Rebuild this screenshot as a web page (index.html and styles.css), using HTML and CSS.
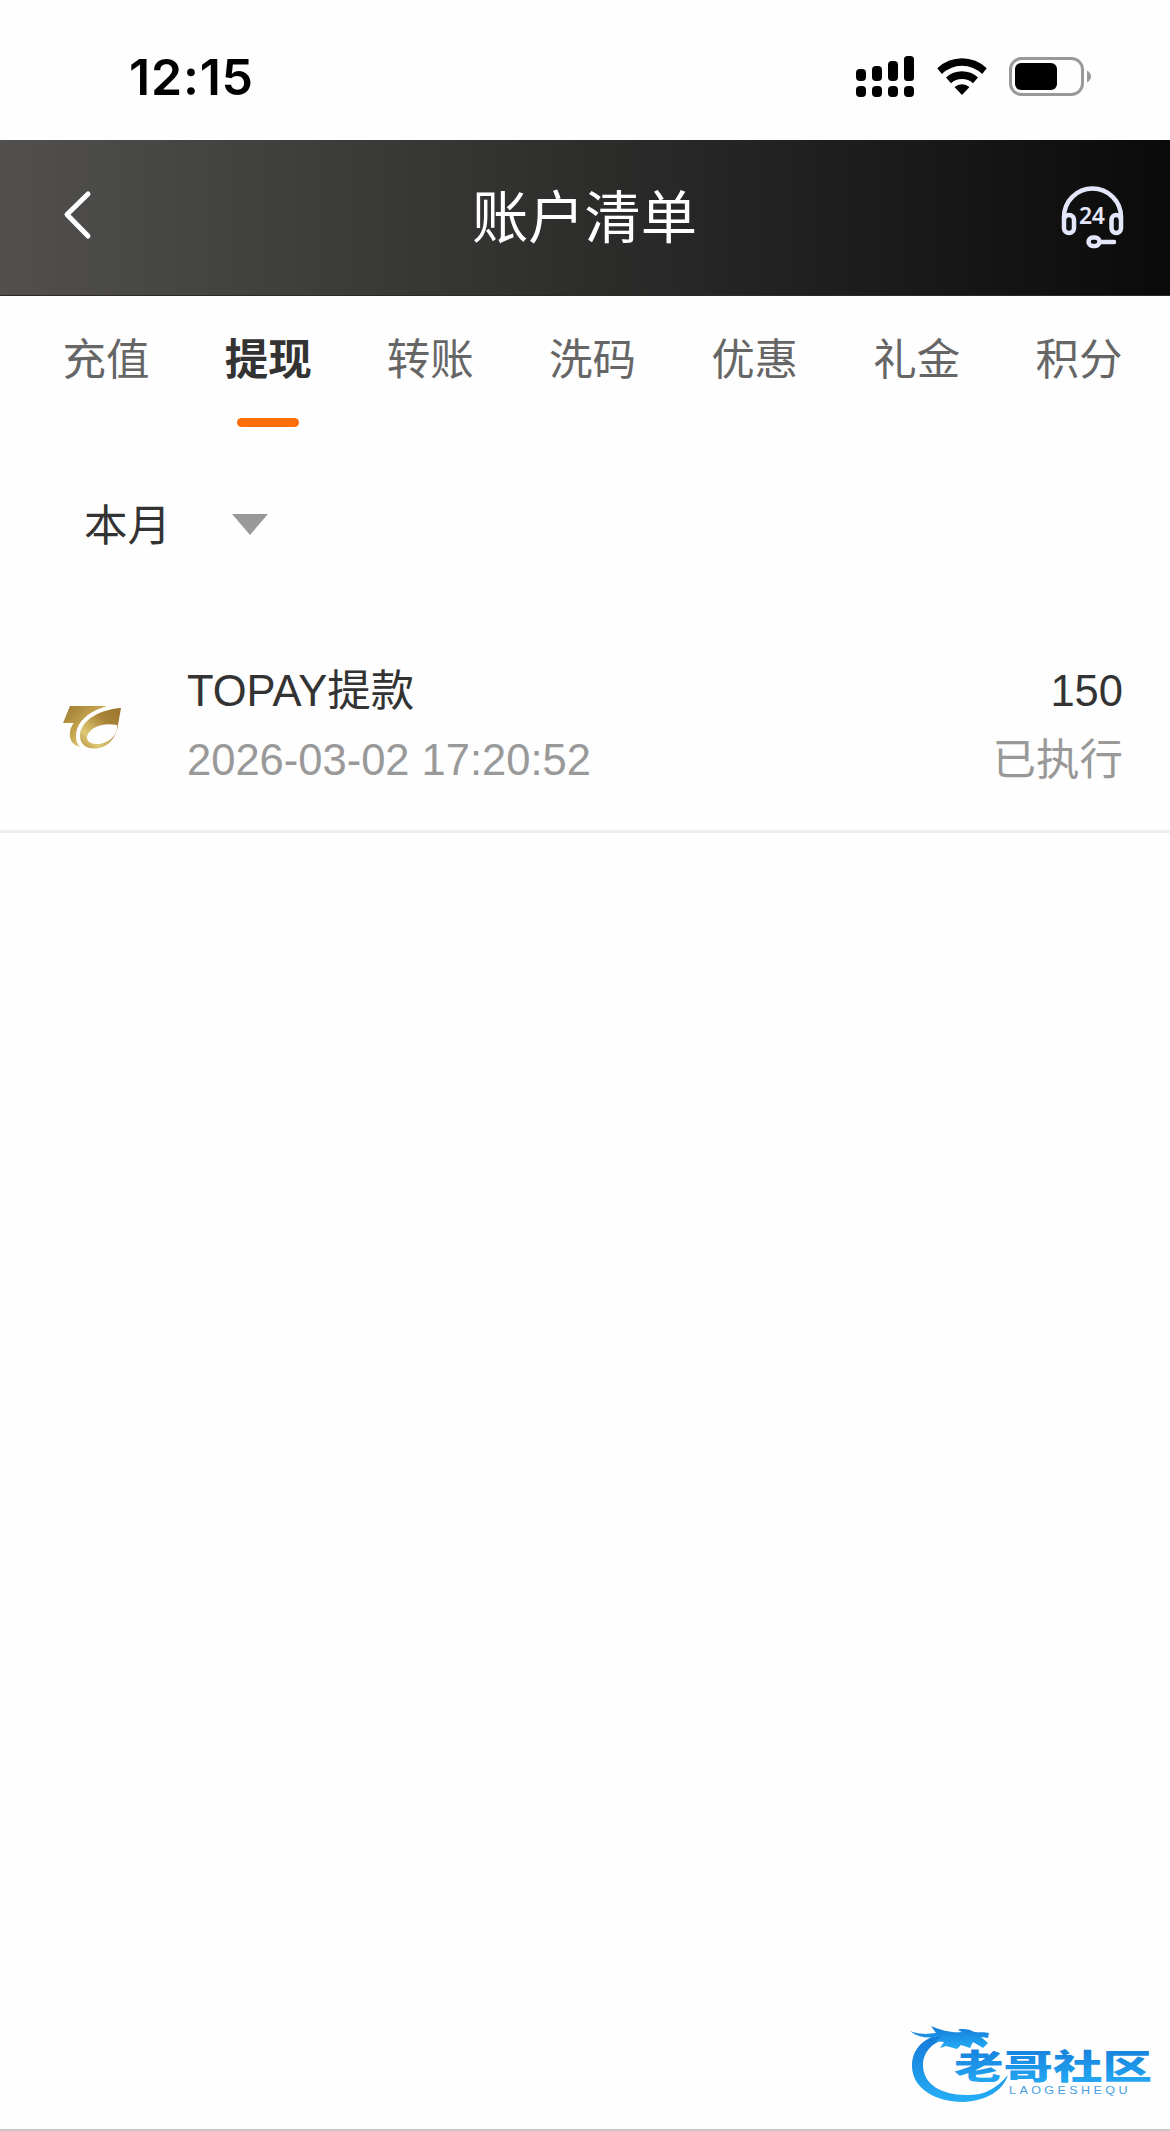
FILE: index.html
```html
<!DOCTYPE html>
<html lang="zh-CN">
<head>
    <meta charset="UTF-8">
    <title>账户清单</title>
    <link rel="stylesheet" href="styles.css">
</head>
<body>
    <div class="status-bar">
        <span class="time">12:15</span>
        <div class="status-icons">
            <svg class="signal" width="58" height="42" viewBox="0 0 58 42">
                <rect x="0" y="13" width="10" height="12" rx="4"/>
                <rect x="16" y="10" width="10" height="15" rx="4"/>
                <rect x="32" y="5" width="10" height="20" rx="4"/>
                <rect x="48" y="0" width="10" height="25" rx="3.5"/>
                <rect x="0" y="30" width="10" height="11" rx="4"/>
                <rect x="16" y="30" width="10" height="11" rx="4"/>
                <rect x="32" y="30" width="10" height="11" rx="4"/>
                <rect x="48" y="30" width="10" height="11" rx="4"/>
            </svg>
            <svg class="wifi" width="50" height="38" viewBox="0 0 50 38">
                <path d="M0.3 10.2a35.500 35.500 0 0 1 49.400 0l-4.500 5.800a29 29 0 0 0-40.400 0z"/>
                <path d="M9 19.500a23.500 23.500 0 0 1 32 0l-5 5.700a16.500 16.500 0 0 0-22 0z"/>
                <path d="M17.500 29a11.500 11.500 0 0 1 15 0L25 37z"/>
            </svg>
            <svg class="battery" width="82" height="39" viewBox="0 0 82 39">
                <rect class="battery-case" x="1.500" y="1.500" width="72" height="36" rx="11"/>
                <rect x="6" y="6" width="42" height="27" rx="6"/>
                <path class="battery-tip" d="M78 13.500q4 2.500 4 6t-4 6z"/>
            </svg>
        </div>
    </div>

    <div class="header">
        <svg class="back" width="30" height="50" viewBox="0 0 30 50">
            <path d="M26 4L5 24.500L26 46"/>
        </svg>
        <h1 class="title">账户清单</h1>
        <svg class="service" width="64" height="64" viewBox="0 0 64 64">
            <path d="M3 33v-2a28.500 28.500 0 0 1 57 0v2"/>
            <rect x="3" y="29" width="10" height="18" rx="5"/>
            <rect x="50.500" y="29" width="9.500" height="18" rx="4.700"/>
            <rect x="27.500" y="51.500" width="11" height="8.500" rx="4.200"/>
            <path d="M39 56h14"/>
            <text x="18" y="37.500" textLength="26">24</text>
        </svg>
    </div>

    <ul class="tabs">
        <li class="tab">充值</li>
        <li class="tab active">提现</li>
        <li class="tab">转账</li>
        <li class="tab">洗码</li>
        <li class="tab">优惠</li>
        <li class="tab">礼金</li>
        <li class="tab">积分</li>
    </ul>

    <div class="filter">
        <span>本月</span>
        <span class="arrow"></span>
    </div>

    <div class="record">
        <svg class="record-logo" width="60" height="44" viewBox="0 0 60 44">
            <defs>
                <linearGradient id="gold" x1="0" y1="0" x2="1" y2="1">
                    <stop offset="0" stop-color="#9b7732"/>
                    <stop offset=".45" stop-color="#c5a54e"/>
                    <stop offset=".75" stop-color="#e2cd7c"/>
                    <stop offset="1" stop-color="#a98338"/>
                </linearGradient>
                <linearGradient id="goldRing" x1="1" y1="0" x2="0" y2="1">
                    <stop offset="0" stop-color="#9a742d"/>
                    <stop offset=".35" stop-color="#a98337"/>
                    <stop offset=".75" stop-color="#dfc974"/>
                    <stop offset="1" stop-color="#b18e40"/>
                </linearGradient>
            </defs>
            <path fill="url(#gold)" d="M8 1H45C32 5 19 12 15 24C13 32 14 38 18 42C10 40 7 34 8 27C9 22 10 20 12 18H1Z"/>
            <path fill="url(#goldRing)" d="M59 3C41 4 18 14 18 31C18 39 24 43.500 32 43.500C46 43.500 54 33 56 20L59 3ZM55 20C56 31 46 39 35 39C28 39 25 36 25 32C26 24 39 17 55 20Z"/>
        </svg>
        <div class="record-info">
            <p>TOPAY提款</p>
            <p class="sub">2026-03-02 17:20:52</p>
        </div>
        <div class="record-amount">
            <p>150</p>
            <p class="sub">已执行</p>
        </div>
    </div>

    <div class="footer">
        <svg class="community" width="250" height="86" viewBox="0 0 250 86">
            <defs>
                <linearGradient id="blue" x1="0" y1="0" x2="0" y2="1">
                    <stop offset="0" stop-color="#1478d8"/>
                    <stop offset="1" stop-color="#25aef5"/>
                </linearGradient>
            </defs>
            <g fill="url(#blue)">
                <path d="M38 9C18 13 8 25 8 41C8 63 31 77 59 77C82 76 99 66 104 50C91 66 76 71 62 70C37 70 19 59 19 40C19 27 29 17 42 14Z"/>
                <path d="M6 6C17 10 24 9 32 8L27 1C39 6 48 8 58 7C50 4 57 3 66 5C73 9 78 6 85 8L84 13L77 12L84 18L79 23L69 17L66 23L57 20L53 24L42 21L36 23L40 17L31 16L38 11C26 14 14 13 6 6Z"/>
            </g>
            <text class="community-name" x="50" y="54" textLength="198" lengthAdjust="spacingAndGlyphs">老哥社区</text>
            <text class="community-latin" x="105" y="69" textLength="122" lengthAdjust="spacingAndGlyphs">LAOGESHEQU</text>
        </svg>
    </div>
</body>
</html>
```
FILE: styles.css
```css
*{
    margin: 0;
    padding: 0;
    box-sizing: border-box;
}
body{
    width: 1170px;
    height: 2131px;
    font-family: "Liberation Sans", "Noto Sans CJK SC", sans-serif;
    font-size: 43.5px;
    color: #333;
    background-color: #fefefe;
    display: flex;
    flex-direction: column;
}
.status-bar{
    height: 140px;
    padding: 0 79px 0 129px;
    display: flex;
    justify-content: space-between;
}
.time{
    margin-top: 46px;
    font-family: Inter, sans-serif;
    font-size: 50px;
    font-weight: 600;
    line-height: 62px;
    letter-spacing: 0.8px;
    color: #000;
}
.status-icons{
    display: flex;
    align-items: flex-start;
}
.signal{
    margin-top: 56px;
}
.wifi{
    margin: 58px 22px 0 23px;
}
.battery{
    margin-top: 57px;
}
.battery-case{
    fill: none;
    stroke: #999;
    stroke-width: 3;
}
.battery-tip{
    fill: #999;
}
.header{
    height: 156px;
    padding: 0 45px 0 62px;
    display: flex;
    justify-content: space-between;
    background: linear-gradient(to right, #51504e, #0a0a0a);
    border-bottom: 1px solid #2b2a29;
}
.back{
    margin-top: 50px;
    fill: none;
    stroke: #fff;
    stroke-width: 5;
    stroke-linecap: round;
    stroke-linejoin: round;
}
.title{
    margin-left: 16px;
    padding-top: 2px;
    font-size: 56.3px;
    font-weight: 400;
    line-height: 154px;
    color: #fff;
}
.service{
    margin-top: 46px;
    fill: none;
    stroke: #e4e7fb;
    stroke-width: 4.5;
    stroke-linecap: round;
}
.service text{
    font-family: "Noto Sans", sans-serif;
    font-size: 23px;
    font-weight: 600;
    fill: #e4e7fb;
    stroke: none;
}
.tabs{
    height: 140px;
    padding: 0 10px 0 25px;
    display: flex;
    list-style: none;
    color: #666;
}
.tab{
    flex: 1;
    padding-top: 32px;
    display: flex;
    flex-direction: column;
    align-items: center;
    line-height: 64px;
}
.active{
    font-weight: 700;
    color: #333;
}
.active::after{
    content: "";
    width: 62px;
    height: 9px;
    margin-top: 26px;
    border-radius: 5px;
    background-color: #ff6d0a;
}
.filter{
    height: 180px;
    padding: 0 84px 4px;
    display: flex;
    align-items: center;
    gap: 61px;
}
.filter span:first-child{
    padding-bottom: 4px;
}
.arrow{
    border: 18px solid transparent;
    border-top: 21px solid #999;
    border-bottom: 0;
}
.record{
    height: 217px;
    padding: 40px 47px 0 62px;
    display: flex;
    border-bottom: 3px solid #eee;
}
.record-logo{
    margin-top: 49px;
}
.record-info{
    margin-left: 65px;
    flex: 1;
}
.record-amount{
    text-align: right;
}
.record p{
    height: 69px;
    line-height: 70px;
}
.record .sub{
    color: #999;
}
.footer{
    margin-top: auto;
    padding: 0 16px 18px 0;
    display: flex;
    justify-content: flex-end;
    border-bottom: 2px solid #c8c8c8;
}
.community-name{
    font-family: "Noto Sans CJK SC", sans-serif;
    font-size: 34px;
    font-weight: 900;
    fill: url(#blue);
}
.community-latin{
    font-size: 11px;
    letter-spacing: 3px;
    fill: #4a9fe0;
}
```
